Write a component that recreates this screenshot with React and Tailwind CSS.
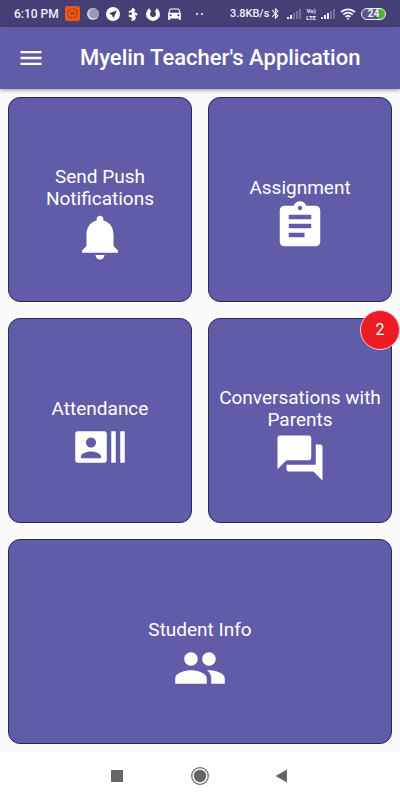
import React from "react";

function Icon({ d, className }) {
  return (
    <svg viewBox="0 0 24 24" fill="currentColor" aria-hidden="true" className={className}>
      <path fillRule="evenodd" d={d} />
    </svg>
  );
}

const ICONS = {
  menu: "M3 18h18v-2H3v2zm0-5h18v-2H3v2zm0-7v2h18V6H3z",
  bell: "M12 22c1.1 0 2-.9 2-2h-4c0 1.1.89 2 2 2zm6-6v-5c0-3.07-1.64-5.64-4.5-6.32V4c0-.83-.67-1.5-1.5-1.5s-1.5.67-1.5 1.5v.68C7.63 5.36 6 7.92 6 11v5l-2 2v1h16v-1l-2-2z",
  assignment:
    "M19 3h-4.18C14.4 1.84 13.3 1 12 1c-1.3 0-2.4.84-2.82 2H5c-1.1 0-2 .9-2 2v14c0 1.1.9 2 2 2h14c1.1 0 2-.9 2-2V5c0-1.1-.9-2-2-2zm-7 0c.55 0 1 .45 1 1s-.45 1-1 1-1-.45-1-1 .45-1 1-1zm2 14H7v-2h7v2zm3-4H7v-2h10v2zm0-4H7V7h10v2z",
  attendance:
    "M21 5v14h2V5h-2zm-4 14h2V5h-2v14zM14 5H2c-.55 0-1 .45-1 1v12c0 .55.45 1 1 1h12c.55 0 1-.45 1-1V6c0-.55-.45-1-1-1zM8 7.75c1.24 0 2.25 1.01 2.25 2.25S9.24 12.25 8 12.25 5.75 11.24 5.75 10 6.76 7.75 8 7.75zM12.5 17h-9v-.75c0-1.5 3-2.25 4.5-2.25s4.5.75 4.5 2.25V17z",
  forum:
    "M21 6h-2v9H6v2c0 .55.45 1 1 1h11l4 4V7c0-.55-.45-1-1-1zm-4 6V3c0-.55-.45-1-1-1H3c-.55 0-1 .45-1 1v14l4-4h10c.55 0 1-.45 1-1z",
  people:
    "M16 11c1.66 0 2.99-1.34 2.99-3S17.66 5 16 5c-1.66 0-3 1.34-3 3s1.34 3 3 3zm-8 0c1.66 0 2.99-1.34 2.99-3S9.66 5 8 5C6.34 5 5 6.34 5 8s1.34 3 3 3zm0 2c-2.33 0-7 1.17-7 3.5V19h14v-2.5c0-2.33-4.67-3.5-7-3.5zm8 0c-.29 0-.62.02-.97.05 1.16.84 1.97 1.97 1.97 3.45V19h6v-2.5c0-2.33-4.67-3.5-7-3.5z",
  car: "M18.92 6.01C18.72 5.42 18.16 5 17.5 5h-11c-.66 0-1.21.42-1.42 1.01L3 12v8c0 .55.45 1 1 1h1c.55 0 1-.45 1-1v-1h12v1c0 .55.45 1 1 1h1c.55 0 1-.45 1-1v-8l-2.08-5.99zM6.5 16c-.83 0-1.5-.67-1.5-1.5S5.67 13 6.5 13s1.5.67 1.5 1.5S7.33 16 6.5 16zm11 0c-.83 0-1.5-.67-1.5-1.5s.67-1.5 1.5-1.5 1.5.67 1.5 1.5-.67 1.5-1.5 1.5zM5 11l1.5-4.5h11L19 11H5z",
  bluetooth:
    "M17.71 7.71L12 2h-1v7.59L6.41 5 5 6.41 10.59 12 5 17.59 6.41 19 11 14.41V22h1l5.71-5.71-4.3-4.29 4.3-4.29zM13 5.83l1.88 1.88L13 9.59V5.83zm1.88 10.46L13 18.17v-3.76l1.88 1.88z",
};

function Signal({ active }) {
  const bars = [
    [0, 9, 2],
    [3, 7, 4],
    [6, 5, 6],
    [9, 3, 8],
    [12, 1, 10],
  ];
  return (
    <svg viewBox="0 0 14 11" className="h-[11px] w-[14px] shrink-0" aria-hidden="true">
      {bars.map(([x, y, h], i) => (
        <rect key={x} x={x} y={y} width="2" height={h} fill={i < active ? "#f1f0fa" : "#7772a5"} />
      ))}
    </svg>
  );
}

function StatusBar() {
  return (
    <div className="flex h-[27px] items-center justify-between bg-[#443f75] px-[14px] text-[#f1f0fa]">
      <div className="flex items-center gap-[6px]">
        <span className="text-[12px] leading-none font-medium whitespace-nowrap">6:10 PM</span>
        <svg viewBox="0 0 15 15" className="size-[15px]" aria-hidden="true">
          <rect width="15" height="15" rx="2" fill="#e9581b" />
          <circle cx="7.5" cy="7.5" r="4.8" fill="none" stroke="#9c3512" strokeWidth="1" strokeDasharray="6 1.5" />
          <path d="M5.5 7h4M6.5 7v1.5M8.500 7v1.5" stroke="#8c2d10" strokeWidth="1" />
        </svg>
        <svg viewBox="0 0 14 14" className="size-[14px]" aria-hidden="true">
          <circle cx="7" cy="7" r="6" fill="#d2d0e4" />
          <circle cx="8" cy="6.5" r="5" fill="#9a96bd" />
        </svg>
        <svg viewBox="0 0 14 14" className="size-[14px]" aria-hidden="true">
          <circle cx="7" cy="7" r="7" fill="#fff" />
          <path d="M10.8 3.5L3 6.6l3 1.4 1.5 3z" fill="#37335f" />
        </svg>
        <svg viewBox="0 0 14 14" className="size-[14px]" aria-hidden="true">
          <path
            d="M6.500 .5l3 2.500-1.500 2 3.500 1.500-.5 2-2.500-.3 1.500 2.300-1.500 3H4.500l2-2.500L2.500 9.500l.5-2 3 .5L5.500 5 2.800 6V4.200L5.500 3z"
            fill="#fff"
          />
        </svg>
        <svg viewBox="0 0 14 14" className="size-[14px]" aria-hidden="true">
          <path d="M4.200 2.900a5 5 0 1 0 5.600 0" fill="none" stroke="#fff" strokeWidth="3.800" />
          <path d="M4.500 4.500L7 7l2.500-2.500" fill="#443f75" />
        </svg>
        <Icon d={ICONS.car} className="size-[17px] text-white" />
        <svg viewBox="0 0 9 4" className="ml-[6px] h-1 w-[9px]" aria-hidden="true">
          <circle cx="2" cy="2" r="1" fill="#fff" />
          <circle cx="7" cy="2" r="1" fill="#fff" />
        </svg>
      </div>
      <div className="flex items-center gap-[5px]">
        <div className="flex items-center">
          <span className="text-[11px] leading-none font-medium whitespace-nowrap">3.8KB/s</span>
          <Icon d={ICONS.bluetooth} className="size-[13px]" />
        </div>
        <Signal active={2} />
        <span className="flex flex-col text-center text-[6px] leading-[7px] font-bold">
          <span>Vo)</span>
          <span>LTE</span>
        </span>
        <Signal active={3} />
        <svg viewBox="0 0 16 12" className="h-3 w-4" fill="none" stroke="currentColor" strokeWidth="1.8" aria-hidden="true">
          <path d="M1 4.200a10 10 0 0 1 14 0M3.300 6.600a6.700 6.700 0 0 1 9.400 0M5.500 8.900a3.600 3.600 0 0 1 5 0" />
          <circle cx="8" cy="10.800" r="1" fill="currentColor" stroke="none" />
        </svg>
        <span className="flex h-3 w-[25px] items-center justify-center rounded-full border border-[#f1f0fa] bg-linear-to-r from-[#5b5788] from-70% to-[#4fae3c] to-70% text-[10px] leading-none font-bold">
          24
        </span>
      </div>
    </div>
  );
}

function Card({ label, icon, badge, className = "" }) {
  return (
    <button
      type="button"
      className={`relative flex h-[205px] flex-col items-center justify-center rounded-xl border border-[#2b2560] bg-[#615ca8] px-2 pt-[30px] text-white ${className}`}
    >
      <span className="max-w-[164px] text-[19px] leading-[22px]">{label}</span>
      <Icon d={icon} className="size-[54px] shrink-0" />
      {badge && (
        <span className="absolute -top-[9px] -right-[9px] flex size-10 items-center justify-center rounded-full border border-[#f6c9d2] bg-[#ed1c24] text-[16px]">
          {badge}
        </span>
      )}
    </button>
  );
}

export default function App() {
  return (
    <div className="flex min-h-screen flex-col bg-[#fafafa] font-[Roboto,sans-serif]">
      <StatusBar />
      <header className="flex h-[62px] items-center bg-[#615ca8] pl-[17px] text-white shadow-[0_1px_4px_rgba(0,0,0,0.4)]">
        <button type="button" aria-label="Open menu">
          <Icon d={ICONS.menu} className="size-7" />
        </button>
        <h1 className="ml-[35px] text-[22px] leading-7 font-medium whitespace-nowrap">Myelin Teacher's Application</h1>
      </header>
      <main className="grid flex-1 grid-cols-2 content-start gap-4 p-2">
        <Card label="Send Push Notifications" icon={ICONS.bell} />
        <Card label="Assignment" icon={ICONS.assignment} />
        <Card label="Attendance" icon={ICONS.attendance} />
        <Card label="Conversations with Parents" icon={ICONS.forum} badge="2" />
        <Card label="Student Info" icon={ICONS.people} className="col-span-2" />
      </main>
      <nav className="flex h-12 items-center justify-center gap-[64px] bg-white text-[#666]">
        <button type="button" aria-label="Recent apps">
          <svg viewBox="0 0 20 20" className="size-5" aria-hidden="true">
            <rect x="5" y="4" width="12" height="12" fill="currentColor" />
          </svg>
        </button>
        <button type="button" aria-label="Home">
          <svg viewBox="0 0 20 20" className="size-5" aria-hidden="true">
            <circle cx="10" cy="10" r="8.300" fill="none" stroke="currentColor" strokeWidth="1.200" />
            <circle cx="10" cy="10" r="6.200" fill="currentColor" />
          </svg>
        </button>
        <button type="button" aria-label="Back">
          <svg viewBox="0 0 20 20" className="size-5" aria-hidden="true">
            <path d="M1.500 10L13 3.500v13z" fill="currentColor" />
          </svg>
        </button>
      </nav>
    </div>
  );
}
